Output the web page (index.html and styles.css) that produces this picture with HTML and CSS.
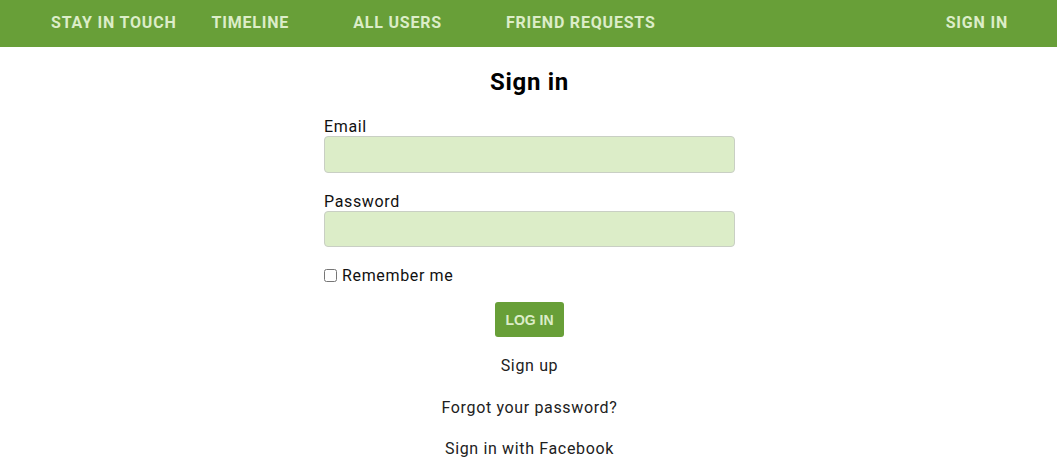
FILE: index.html
```html
<!DOCTYPE html>
<html lang="en">
<head>
<meta charset="utf-8">
<title>Sign in</title>
<link rel="stylesheet" href="styles.css">
</head>
<body>
<nav class="topnav">
  <div class="nav-left">
    <a class="brand" href="#">Stay in touch</a>
    <a class="nav-link" href="#">Timeline</a>
    <a class="nav-link" href="#">All users</a>
    <a class="nav-link" href="#">Friend requests</a>
  </div>
  <a class="nav-signin" href="#">Sign in</a>
</nav>
<div class="page">
<main class="auth">
  <h1 class="auth-title">Sign in</h1>
  <form class="auth-form">
    <label class="field-label" for="email">Email</label>
    <input class="field-input" id="email" type="email" autofocus>
    <label class="field-label field-gap" for="password">Password</label>
    <input class="field-input" id="password" type="password">
    <div class="remember">
      <input class="remember-box" id="remember" type="checkbox">
      <label for="remember">Remember me</label>
    </div>
    <div class="actions">
      <button class="btn-login" type="button">LOG IN</button>
    </div>
  </form>
  <div class="auth-links">
    <a href="#">Sign up</a>
    <a href="#">Forgot your password?</a>
    <a href="#">Sign in with Facebook</a>
  </div>
</main>
</div>
</body>
</html>
```

FILE: styles.css
```css
* { box-sizing: border-box; }
body {
  margin: 0;
  font-family: Roboto, "Liberation Sans", sans-serif;
  font-size: 16px;
  letter-spacing: 0.65px;
  color: #212121;
  background: #fff;
}
.topnav {
  height: 47px;
  background: #689f38;
  display: flex;
  align-items: center;
  justify-content: space-between;
  padding: 0 49px 3px 51px;
}
.nav-left { display: flex; align-items: center; }
.topnav a {
  color: #dcedc8;
  text-decoration: none;
  text-transform: uppercase;
  font-weight: 700;
  font-size: 16px;
  letter-spacing: 0.8px;
}
.brand { margin-right: 3px; }
.nav-link { padding: 0 32px; }
.page { padding-left: 2px; }
.auth {
  width: 411px;
  margin: 0 auto;
  padding-top: 21px;
}
.auth-title {
  margin: 0 0 21px;
  font-size: 24px;
  line-height: 28px;
  letter-spacing: 0.7px;
  text-align: center;
  color: #000;
  font-weight: 700;
}
.auth-form { display: flex; flex-direction: column; }
.field-label { display: block; line-height: 19px; color: #111; }
.field-gap { margin-top: 19px; }
.field-input {
  display: block;
  width: 100%;
  height: 37px;
  margin: 0;
  background: #dcedc8;
  border: 1px solid #c9cfc4;
  border-radius: 4px;
  padding: 0 8px;
  font: 16px Roboto, sans-serif;
  color: #333;
  outline: none;
  caret-color: #333;
}
#password { height: 36px; }
.remember {
  display: flex;
  align-items: center;
  margin-top: 19px;
  line-height: 19px;
  color: #111;
}
.remember-box {
  width: 13px;
  height: 13px;
  margin: 0 5px 0 0;
}
.actions {
  display: flex;
  justify-content: center;
  margin-top: 17px;
}
.btn-login {
  height: 35px;
  padding: 0 10px;
  border: none;
  border-radius: 3px;
  background: #689f38;
  color: #dcedc8;
  letter-spacing: 0;
  font: 700 14px "Liberation Sans", Arial, sans-serif;
}
.auth-links {
  display: flex;
  flex-direction: column;
  align-items: center;
  gap: 22.5px;
  margin-top: 19px;
}
.auth-links a {
  color: #212121;
  text-decoration: none;
  line-height: 19px;
}
```
